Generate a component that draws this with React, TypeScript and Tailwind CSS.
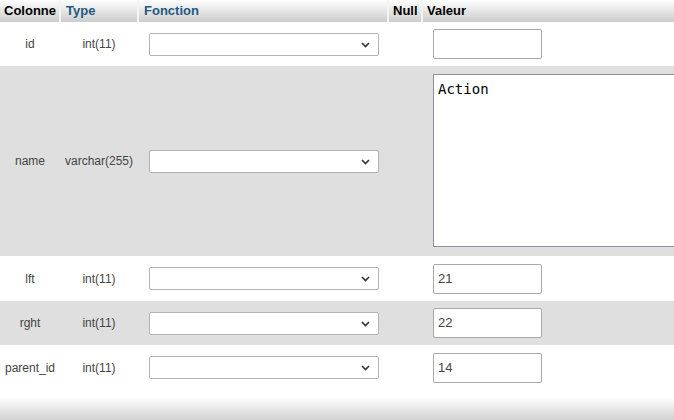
import React from 'react';

type Field = {
  name: string;
  type: string;
  value: string;
  bg: string;
  h: string;
  long?: boolean;
};

const fields: Field[] = [
  { name: 'id', type: 'int(11)', value: '', bg: 'bg-white', h: 'h-[44px]' },
  { name: 'name', type: 'varchar(255)', value: 'Action', bg: 'bg-[#dfdfdf]', h: 'h-[190px]', long: true },
  { name: 'lft', type: 'int(11)', value: '21', bg: 'bg-white', h: 'h-[45px]' },
  { name: 'rght', type: 'int(11)', value: '22', bg: 'bg-[#dfdfdf]', h: 'h-[44px]' },
  { name: 'parent_id', type: 'int(11)', value: '14', bg: 'bg-white', h: 'h-[45px]' },
];

const FunctionSelect = () => (
  <div className="relative w-[230px] h-[23px] bg-white border border-[#b4b4b4] rounded-[2px]">
    <svg
      className="absolute right-[8px] top-[8px]"
      width="9"
      height="6"
      viewBox="0 0 9 6"
      fill="none"
    >
      <path d="M1 1l3.5 3.5L8 1" stroke="#333" strokeWidth="1.6" />
    </svg>
  </div>
);

export default function App() {
  return (
    <div
      className="w-[674px] h-[420px] overflow-hidden bg-white text-[12px] text-[#444]"
      style={{ fontFamily: '"Liberation Sans", Arial, sans-serif' }}
    >
      <table className="table-fixed border-collapse w-[674px]">
        <colgroup>
          <col className="w-[60px]" />
          <col className="w-[78px]" />
          <col className="w-[250px]" />
          <col className="w-[34px]" />
          <col className="w-[252px]" />
        </colgroup>
        <thead>
          <tr className="h-[22px] bg-gradient-to-b from-white to-[#cccccc] text-[13px] font-bold text-left">
            <th className="px-[4px] text-black">Colonne</th>
            <th className="px-[5px] text-[#235a81] border-l-2 border-[#f4f4f4]">Type</th>
            <th className="px-[5px] text-[#235a81] border-l-2 border-[#f4f4f4]">Fonction</th>
            <th className="px-[4px] text-black border-l-2 border-[#f4f4f4]">Null</th>
            <th className="px-[4px] text-black border-l-2 border-[#f4f4f4]">Valeur</th>
          </tr>
        </thead>
        <tbody>
          {fields.map((f) => (
            <tr key={f.name} className={`${f.bg} ${f.h}`}>
              <td className="text-center">{f.name}</td>
              <td className="text-center">{f.type}</td>
              <td className="pl-[11px]">
                <FunctionSelect />
              </td>
              <td></td>
              <td className={f.long ? 'pl-[11px] align-top pt-[8px]' : 'pl-[11px]'}>
                {f.long ? (
                  <div
                    className="w-[320px] h-[173px] bg-white border border-[#8f8f9d] px-[4px] pt-[4px] text-[14px] text-black"
                    style={{ fontFamily: '"DejaVu Sans Mono", "Liberation Mono", monospace' }}
                  >
                    {f.value}
                  </div>
                ) : (
                  <div className="w-[109px] h-[30px] bg-white border border-[#a9a9a9] rounded-[2px] px-[4px] flex items-center text-[13px] text-[#444]">
                    {f.value}
                  </div>
                )}
              </td>
            </tr>
          ))}
        </tbody>
      </table>
      <div className="h-[30px] bg-gradient-to-b from-white from-[25%] to-[#d2d2d2]" />
    </div>
  );
}
